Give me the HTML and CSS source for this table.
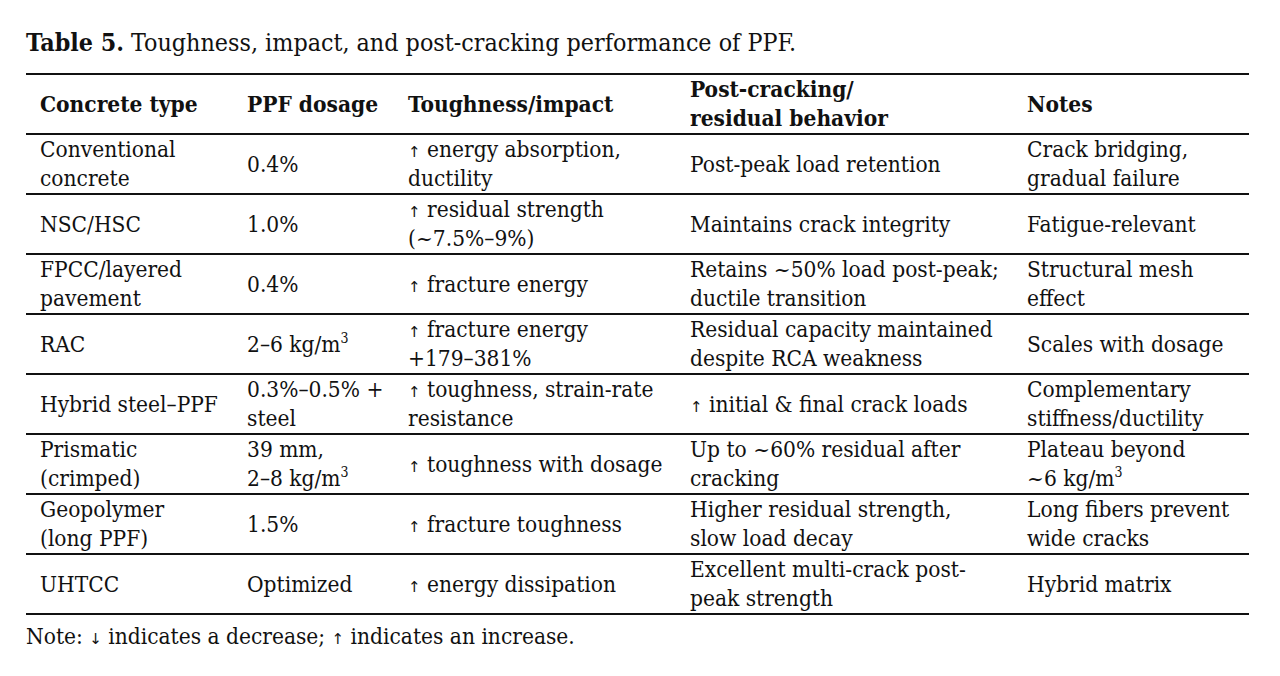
FILE: index.html
```html
<!DOCTYPE html>
<html>
<head>
<meta charset="utf-8">
<link rel="stylesheet" href="styles.css">
</head>
<body>
<div class="page">
  <p class="caption"><b>Table 5.</b> Toughness, impact, and post-cracking performance of PPF.</p>
  <table class="data">
    <colgroup>
      <col class="c1"><col class="c2"><col class="c3"><col class="c4"><col class="c5">
    </colgroup>
    <thead>
      <tr><th>Concrete type</th><th>PPF dosage</th><th>Toughness/impact</th><th>Post-cracking/<br>residual behavior</th><th>Notes</th></tr>
    </thead>
    <tbody>
      <tr><td>Conventional<br>concrete</td><td>0.4%</td><td><span class="ar">↑</span> energy absorption,<br>ductility</td><td>Post-peak load retention</td><td>Crack bridging,<br>gradual failure</td></tr>
      <tr><td>NSC/HSC</td><td>1.0%</td><td><span class="ar">↑</span> residual strength<br>(~7.5%–9%)</td><td>Maintains crack integrity</td><td>Fatigue-relevant</td></tr>
      <tr><td>FPCC/layered<br>pavement</td><td>0.4%</td><td><span class="ar">↑</span> fracture energy</td><td>Retains ~50% load post-peak;<br>ductile transition</td><td>Structural mesh<br>effect</td></tr>
      <tr><td>RAC</td><td>2–6 kg/m<sup>3</sup></td><td><span class="ar">↑</span> fracture energy<br>+179–381%</td><td>Residual capacity maintained<br>despite RCA weakness</td><td>Scales with dosage</td></tr>
      <tr><td>Hybrid steel–PPF</td><td>0.3%–0.5% +<br>steel</td><td><span class="ar">↑</span> toughness, strain-rate<br>resistance</td><td><span class="ar">↑</span> initial &amp; final crack loads</td><td>Complementary<br>stiffness/ductility</td></tr>
      <tr><td>Prismatic<br>(crimped)</td><td>39 mm,<br>2–8 kg/m<sup>3</sup></td><td><span class="ar">↑</span> toughness with dosage</td><td>Up to ~60% residual after<br>cracking</td><td>Plateau beyond<br>~6 kg/m<sup>3</sup></td></tr>
      <tr><td>Geopolymer<br>(long PPF)</td><td>1.5%</td><td><span class="ar">↑</span> fracture toughness</td><td>Higher residual strength,<br>slow load decay</td><td>Long fibers prevent<br>wide cracks</td></tr>
      <tr><td>UHTCC</td><td>Optimized</td><td><span class="ar">↑</span> energy dissipation</td><td>Excellent multi-crack post-<br>peak strength</td><td>Hybrid matrix</td></tr>
    </tbody>
  </table>
  <p class="note">Note: <span class="ar">↓</span> indicates a decrease; <span class="ar">↑</span> indicates an increase.</p>
</div>
</body>
</html>
```

FILE: styles.css
```css
html, body {
  margin: 0;
  padding: 0;
  background: #ffffff;
}
.page {
  padding: 28px 31px 0 26px;
  font-family: "DejaVu Serif Condensed", "DejaVu Serif", serif;
  font-stretch: condensed;
  color: #111111;
}
.caption {
  margin: 0 0 15px 0;
  font-size: 24.8px;
  line-height: 30px;
}
.caption b {
  font-weight: bold;
}
.data {
  width: 1223px;
  border-collapse: collapse;
  table-layout: fixed;
  font-size: 22.5px;
}
.c1 { width: 207px; }
.c2 { width: 161px; }
.c3 { width: 282px; }
.c4 { width: 337px; }
.c5 { width: 236px; }
.data th, .data td {
  height: 58px;
  padding: 0 0 0 14px;
  text-align: left;
  vertical-align: middle;
  line-height: 29px;
  white-space: nowrap;
  border-bottom: 2px solid #111111;
}
.data th {
  font-weight: bold;
  height: 57px;
}
.data thead tr {
  border-top: 2px solid #111111;
}
.data sup {
  font-size: 14px;
  line-height: 0;
  vertical-align: 9px;
}
.ar {
  font-family: "DejaVu Sans", sans-serif;
  font-size: 15px;
  font-stretch: normal;
  line-height: 0;
}
.note {
  margin: 6px 0 0 0;
  font-size: 22.5px;
  line-height: 30px;
}
```
